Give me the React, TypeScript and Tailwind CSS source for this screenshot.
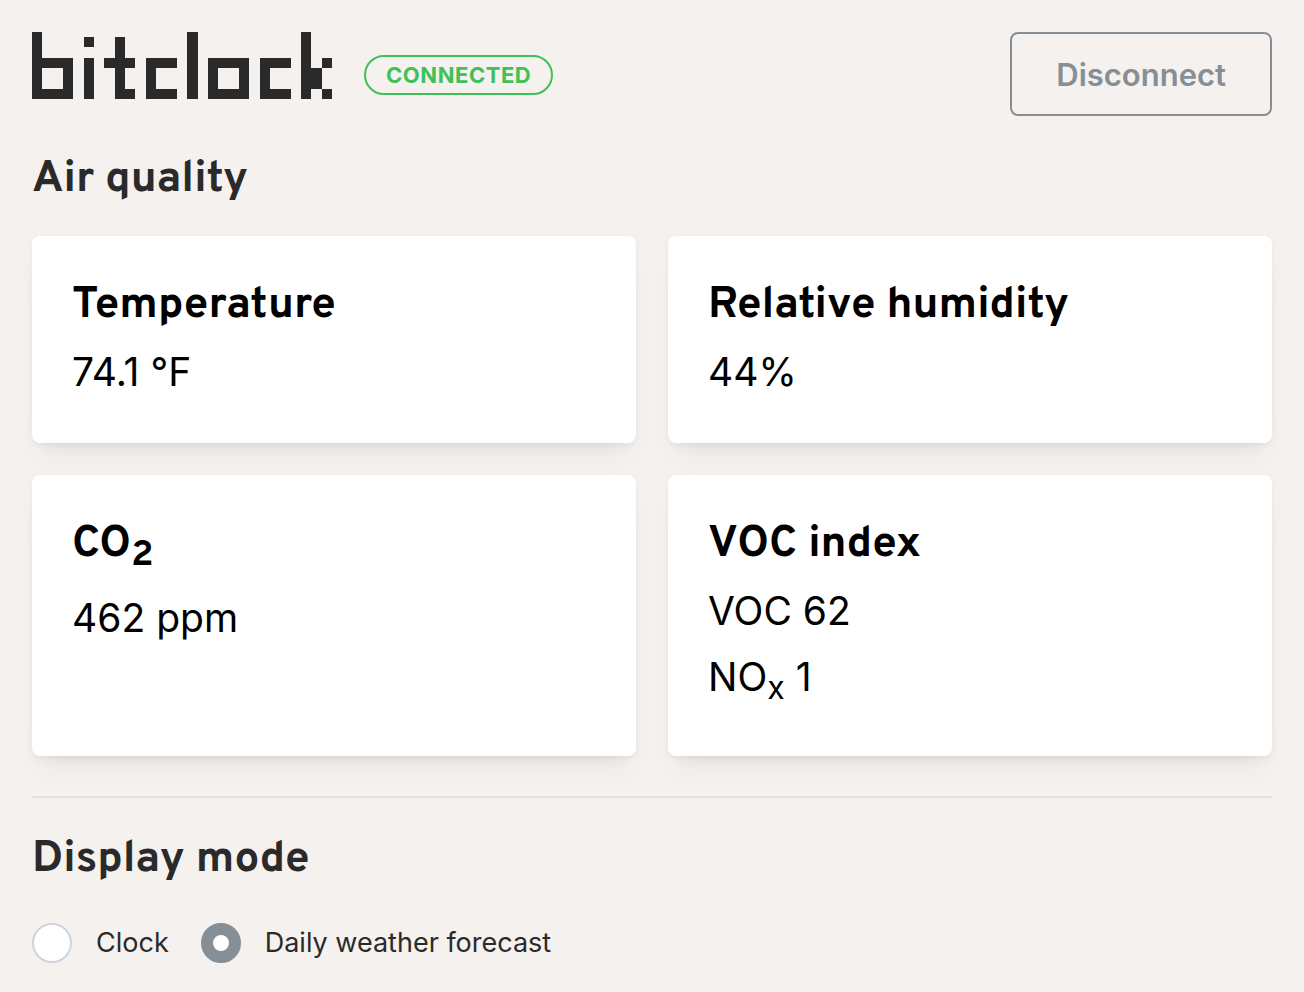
import { useState, type ReactNode } from "react";

function Logo() {
  return (
    <svg
      viewBox="0 0 58 13"
      preserveAspectRatio="none"
      shapeRendering="crispEdges"
      role="img"
      aria-label="bitclock"
      className="h-[67px] w-[300px] shrink-0 fill-[#2a2a2a]"
    >
      <path fillRule="evenodd" d="M0 0h2v5h6v8H0zM2 7v4h4V7z" />
      <path d="M10 1h2v2h-2zM10 5h2v8h-2z" />
      <path d="M16 1h2v4h2v2h-2v4h2v2h-4V7h-2V5h2z" />
      <path d="M22 5h6v2h-4v4h4v2h-6z" />
      <path d="M30 0h2v13h-2z" />
      <path fillRule="evenodd" d="M34 5h8v8h-8zM36 7v4h4V7z" />
      <path d="M44 5h6v2h-4v4h4v2h-6z" />
      <path d="M52 0h2v7h2v4h-2v2h-2zM56 5h2v2h-2zM56 11h2v2h-2z" />
    </svg>
  );
}

function SectionTitle({ children }: { children: ReactNode }) {
  return (
    <h2 className="font-['Overpass','Roboto',sans-serif] text-[44px] leading-[60px] font-bold">
      {children}
    </h2>
  );
}

function Card({ title, children }: { title: ReactNode; children: ReactNode }) {
  return (
    <section className="rounded-lg bg-white p-10 text-black shadow-[0_2px_6px_rgba(0,0,0,0.05),0_20px_30px_-10px_rgba(0,0,0,0.05),0_14px_14px_-10px_rgba(0,0,0,0.04)]">
      <SectionTitle>{title}</SectionTitle>
      <div className="mt-[5px] flex flex-col gap-1 text-[39px] leading-[62px]">{children}</div>
    </section>
  );
}

const modes = [
  { id: "clock", label: "Clock" },
  { id: "weather", label: "Daily weather forecast" },
];

export default function App() {
  const [mode, setMode] = useState("weather");

  return (
    <div className="min-h-screen bg-[#f5f1ee] p-8 pb-7 font-['Inter',sans-serif] text-[#2a2a2a]">
      <header className="flex items-start justify-between">
        <div className="flex items-end gap-8">
          <Logo />
          <span className="mb-1 flex h-10 items-center rounded-full border-2 border-[#40c057] px-5 text-[22px] leading-none font-bold tracking-wide text-[#40c057] uppercase">
            Connected
          </span>
        </div>
        <button
          type="button"
          className="h-[84px] rounded-lg border-2 border-[#868e96] px-11 pt-0.5 text-[31px] font-semibold text-[#868e96]"
        >
          Disconnect
        </button>
      </header>

      <main>
        <div className="mt-[34px]">
          <SectionTitle>Air quality</SectionTitle>
        </div>
        <div className="mt-[26px] grid grid-cols-2 gap-8">
          <Card title="Temperature">
            <p>74.1 °F</p>
          </Card>
          <Card title="Relative humidity">
            <p>44%</p>
          </Card>
          <Card
            title={
              <>
                CO<sub className="text-[37px]">2</sub>
              </>
            }
          >
            <p className="mt-[7px]">462 ppm</p>
          </Card>
          <Card title="VOC index">
            <p>VOC 62</p>
            <p className="pb-2">
              NO<sub className="text-[32px]">x</sub> 1
            </p>
          </Card>
        </div>

        <hr className="mt-10 border-t-2 border-[#dee2e6]" />

        <fieldset className="mt-8">
          <legend className="contents">
            <SectionTitle>Display mode</SectionTitle>
          </legend>
          <div className="mt-[33px] flex gap-8">
            {modes.map(({ id, label }) => (
              <div key={id} className="flex items-center gap-6">
                <input
                  id={id}
                  type="radio"
                  name="mode"
                  checked={mode === id}
                  onChange={() => setMode(id)}
                  className="size-10 appearance-none rounded-full border-2 border-[#ced4da] bg-white checked:border-12 checked:border-[#868e96]"
                />
                <label htmlFor={id} className="text-[27px] leading-10">
                  {label}
                </label>
              </div>
            ))}
          </div>
        </fieldset>
      </main>
    </div>
  );
}
